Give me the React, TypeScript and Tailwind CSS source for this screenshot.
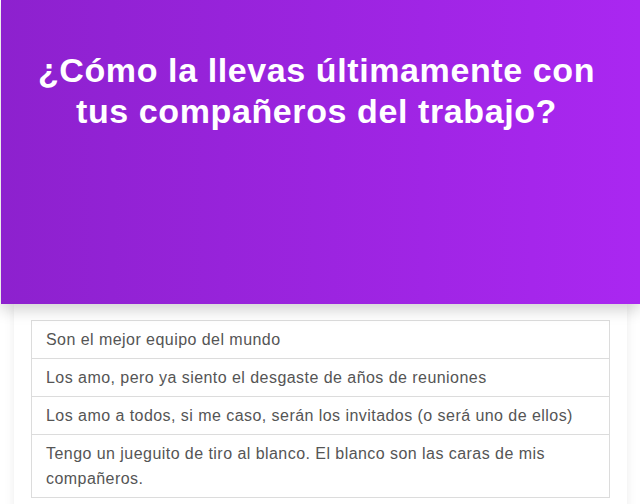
const options = [
  'Son el mejor equipo del mundo',
  'Los amo, pero ya siento el desgaste de años de reuniones',
  'Los amo a todos, si me caso, serán los invitados (o será uno de ellos)',
  'Tengo un jueguito de tiro al blanco. El blanco son las caras de mis compañeros.',
]

export default function App() {
  return (
    <div className="min-h-[504px] bg-white pl-px font-['Liberation_Sans',Arial,sans-serif]">
      {/* Question header */}
      <header className="relative z-10 h-[304px] bg-linear-to-r from-[#8d21ce] to-[#aa27f1] pr-4 pl-2 pt-[50px] shadow-[0_6px_14px_rgba(0,0,0,0.18)]">
        <h1 className="text-center text-[34px] font-bold leading-[41px] tracking-[0.6px] text-white">
          ¿Cómo la llevas últimamente con
          <br />
          tus compañeros del trabajo?
        </h1>
      </header>

      {/* Answers */}
      <div className="mx-[13px] bg-white px-[17px] pt-4 pb-4 shadow-[0_0_10px_rgba(0,0,0,0.08)]">
        <ul className="border border-[#dcdcdc]">
          {options.map((o, i) => (
            <li
              key={i}
              className={`px-[14px] py-[6px] text-[16px] leading-[25px] tracking-[0.45px] text-[#555] ${i > 0 ? 'border-t border-[#dcdcdc]' : ''}`}
            >
              {o}
            </li>
          ))}
        </ul>
      </div>
    </div>
  )
}
